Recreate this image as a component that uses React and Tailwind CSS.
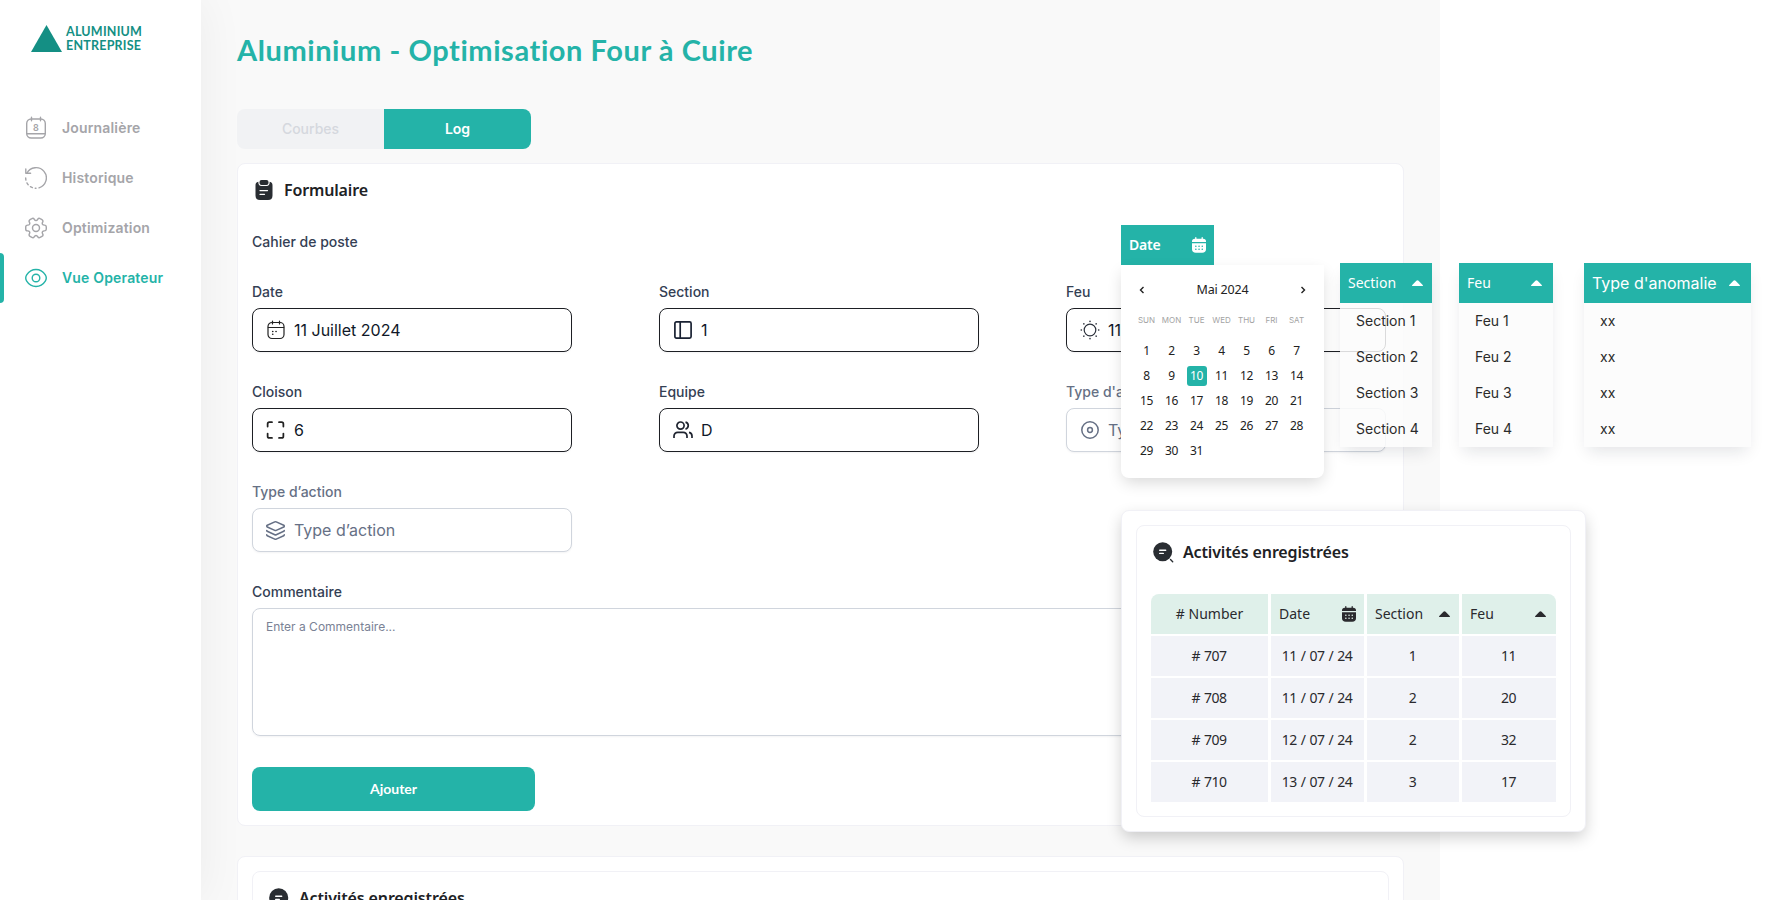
import React, { useState } from "react";
import { Layers, Maximize } from "lucide-react";

const JournalIcon = () => (
  <svg width="22" height="24" viewBox="0 0 22 24" fill="none" stroke="currentColor" strokeWidth="1.4" strokeLinecap="round">
    <rect x="1.7" y="3" width="18.6" height="19" rx="4.5" />
    <path d="M6.5 1.3v3.5M15.5 1.3v3.5M2 17.7h18" />
    <text x="11" y="14.9" textAnchor="middle" fontSize="9" fontWeight="600" fill="currentColor" stroke="none">
      8
    </text>
  </svg>
);

const HistoryIcon = () => (
  <svg width="22" height="24" viewBox="0 0 22 24" fill="none" stroke="currentColor" strokeWidth="1.4" strokeLinecap="round" strokeLinejoin="round">
    <path d="M1.9 7.2A10.3 10.3 0 1 1 14 21.8" />
    <path d="M.8 3v4.3h4.8" />
    <path d="M.7 12a10.3 10.3 0 0 0 10.3 10.3" strokeDasharray="2.2 2.9" />
  </svg>
);

const GearIcon = () => (
  <svg width="22" height="22" viewBox="1.3 1.3 21.4 21.4" fill="none" stroke="currentColor" strokeWidth="1.4" strokeLinejoin="round">
    <circle cx="12" cy="12" r="3.4" />
    <path d="M2 12.9v-1.8c0-1 .85-1.9 1.9-1.9 1.8 0 2.55-1.28 1.64-2.85-.52-.9-.21-2.07.7-2.59l1.73-.97c.79-.47 1.81-.19 2.28.6l.11.19c.9 1.57 2.38 1.57 3.29 0l.11-.19c.47-.79 1.49-1.07 2.28-.6l1.73.97c.91.52 1.22 1.69.7 2.59-.91 1.57-.17 2.85 1.64 2.85 1.04 0 1.9.85 1.9 1.9v1.8c0 1.04-.85 1.9-1.9 1.9-1.81 0-2.55 1.28-1.64 2.85.52.91.21 2.07-.7 2.59l-1.73.97c-.79.47-1.81.19-2.28-.6l-.11-.19c-.9-1.57-2.38-1.57-3.29 0l-.11.19c-.47.79-1.49 1.07-2.28.6l-1.73-.97c-.91-.52-1.22-1.69-.7-2.59.91-1.57.17-2.85-1.64-2.85-1.05 0-1.9-.86-1.9-1.9z" />
  </svg>
);

const EyeIcon = () => (
  <svg width="22" height="24" viewBox="0 0 22 24" fill="none" stroke="currentColor" strokeWidth="1.4">
    <path d="M11 3.5c4.5 0 7.5 2.6 9.3 5.4 1.2 1.9 1.2 4.3 0 6.2-1.8 2.8-4.8 5.4-9.3 5.4s-7.5-2.6-9.3-5.4c-1.2-1.9-1.2-4.3 0-6.2C3.5 6.1 6.5 3.5 11 3.5z" />
    <circle cx="11" cy="12" r="3.8" />
  </svg>
);

const ClipboardIcon = () => (
  <svg width="18" height="20" viewBox="0 0 18 20">
    <rect x="4.5" y="0" width="9" height="5" rx="2" fill="#292d32" />
    <path
      d="M14.7 1.7c0 3-1 4.3-3.2 4.3h-5C4.3 6 3.3 4.7 3.3 1.7 1.2 2 .5 3.4.5 5.5v10c0 3 1.5 4.5 4.500 4.500h8c3 0 4.500-1.500 4.500-4.500v-10c0-2.100-.7-3.500-2.800-3.800z"
      fill="#292d32"
    />
    <path d="M5 10.6h7.500M5 14.300h4.500" stroke="#fff" strokeWidth="1.3" strokeLinecap="round" />
  </svg>
);

const ActivityIcon = () => (
  <svg width="21" height="21" viewBox="0 0 21 21">
    <circle cx="9.7" cy="9.7" r="9.5" fill="#292d32" />
    <path d="M6.7 8.2h6M6.7 11.4h3.6" stroke="#fff" strokeWidth="1.4" strokeLinecap="round" />
    <path d="M17.5 17.5l2.2 2.2" stroke="#292d32" strokeWidth="1.4" strokeLinecap="round" />
  </svg>
);

const CalendarIcon = () => (
  <svg width="18" height="20" viewBox="0 0 18 20" fill="none" stroke="#222" strokeWidth="1.2" strokeLinecap="round">
    <rect x="1" y="2.5" width="16" height="16" rx="4" />
    <path d="M5.5 1v3M12.5 1v3M1.3 7.5h15.4" />
    <path d="M5.7 11.5h.1M9 11.5h.1M5.7 14.3h.1" strokeWidth="1.6" />
  </svg>
);

const ColumnsIcon = () => (
  <svg width="18" height="18" viewBox="0 0 18 18" fill="none" stroke="#1a2233" strokeWidth="1.7">
    <rect x=".9" y=".9" width="16.2" height="16.2" rx="1.5" />
    <path d="M6.2 1v16" />
  </svg>
);

const SunIcon = () => (
  <svg width="20" height="20" viewBox="0 0 20 20" fill="none" stroke="#2a2f3a" strokeWidth="1.2" strokeLinecap="round">
    <circle cx="10" cy="10" r="5.8" />
    <path
      d="M10 1.2v.2M10 18.6v.2M1.2 10h.2M18.6 10h.2M3.8 3.8l.1.1M16.1 3.9l.1-.1M3.8 16.2l.1-.1M16.1 16.1l.1.1"
      strokeWidth="1.5"
    />
  </svg>
);

const UsersIcon = () => (
  <svg width="20" height="18" viewBox="0 0 20 18" fill="none" stroke="#1f2430" strokeWidth="1.7">
    <circle cx="7.5" cy="4.6" r="3.6" />
    <path d="M1 17v-2a3.7 3.7 0 0 1 3.7-3.7h5.6A3.7 3.7 0 0 1 14 15v2" />
    <path d="M12.5 1.1a3.6 3.6 0 0 1 0 7M16 11.4a3.8 3.8 0 0 1 3 3.7V17" />
  </svg>
);

const TargetIcon = () => (
  <svg width="18" height="18" viewBox="0 0 18 18" fill="none" stroke="currentColor" strokeWidth="1.5">
    <circle cx="9" cy="9" r="8.2" />
    <circle cx="9" cy="9" r="2.4" />
  </svg>
);

const CalendarSolid = ({ dots }) => (
  <svg width="14" height="16" viewBox="0 0 14 16" fill="currentColor">
    <path d="M0 5V4.5C0 2.7 1 1.8 2.8 1.8h8.4C13 1.8 14 2.7 14 4.5V5z" />
    <path d="M0 6.2h14v5.8c0 2.5-1.3 3.8-3.8 3.8H3.8C1.3 15.8 0 14.5 0 12z" />
    <path d="M3.8.7v2M10.2.7v2" stroke="currentColor" strokeWidth="1.3" strokeLinecap="round" />
    <path
      d="M3.8 9.3h.1M7 9.3h.1M10.2 9.3h.1M3.8 12.2h.1M7 12.2h.1M10.2 12.2h.1"
      stroke={dots}
      strokeWidth="1.5"
      strokeLinecap="round"
    />
  </svg>
);

const Caret = () => (
  <svg width="11" height="6" viewBox="0 0 11 6" fill="currentColor">
    <path d="M.6 6C0 6-.1 5.3.3 4.9L4.4.7c.7-.7 1.5-.7 2.2 0l4.1 4.2c.4.4.3 1.1-.3 1.1z" />
  </svg>
);

const navItems = [
  { label: "Journalière", icon: <JournalIcon /> },
  { label: "Historique", icon: <HistoryIcon /> },
  { label: "Optimization", icon: <GearIcon /> },
  { label: "Vue Operateur", icon: <EyeIcon />, active: true },
];

const fields = [
  { label: "Date", value: "11 Juillet 2024", icon: <CalendarIcon />, filled: true },
  { label: "Section", value: "1", icon: <ColumnsIcon />, filled: true },
  { label: "Feu", value: "11", icon: <SunIcon />, filled: true },
  { label: "Cloison", value: "6", icon: <Maximize size={22} strokeWidth={2} color="#222" />, filled: true },
  { label: "Equipe", value: "D", icon: <UsersIcon />, filled: true },
  { label: "Type d'anomalie", value: "Type d'anomalie", icon: <TargetIcon /> },
  { label: "Type d’action", value: "Type d’action", icon: <Layers size={21} strokeWidth={1.8} /> },
];

const weekDays = ["SUN", "MON", "TUE", "WED", "THU", "FRI", "SAT"];
const days = Array.from({ length: 31 }, (_, i) => i + 1);

const rows = [
  ["# 707", "11 / 07 / 24", "1", "11"],
  ["# 708", "11 / 07 / 24", "2", "20"],
  ["# 709", "12 / 07 / 24", "2", "32"],
  ["# 710", "13 / 07 / 24", "3", "17"],
];

const Sidebar = () => (
  <aside className="relative z-10 w-[201px] shrink-0 bg-white shadow-[0_0_45px_rgba(0,0,0,0.06)]">
    <div className="flex h-[103px] items-start gap-1 pl-[31px] pt-[25px] text-[#148f84]">
      <svg width="31" height="27" viewBox="0 0 31 27">
        <path d="M15.5 0L31 27H0z" fill="#148f84" />
      </svg>
      <div className="font-['Lato'] text-[12.5px] font-bold leading-[14px] tracking-[0.22px]">
        <div>ALUMINIUM</div>
        <div>ENTREPRISE</div>
      </div>
    </div>
    <nav>
      {navItems.map((item) => (
        <a
          key={item.label}
          className={`relative flex h-[50px] items-center gap-[15px] pl-[25px] text-[14px] font-semibold tracking-[0.17px] ${
            item.active ? "text-[#24b3a8]" : "text-[#a5a5a9]"
          }`}
        >
          {item.active && <span className="absolute left-0 top-0 h-full w-1 rounded-r bg-[#24b3a8]" />}
          {item.icon}
          <span className="pb-0.5">{item.label}</span>
        </a>
      ))}
    </nav>
  </aside>
);

const Field = ({ label, value, icon, filled }) => (
  <div className="h-[100px] w-[320px]">
    <div className={`h-[26px] text-[14px] font-medium leading-5 ${filled ? "text-[#344054]" : "text-[#667085]"}`}>
      {label}
    </div>
    <div
      className={`flex h-11 items-center rounded-lg border bg-white pl-3 text-base shadow-[0_1px_2px_rgba(16,24,40,0.05)] ${
        filled ? "border-[#1d1f24] text-[#101828]" : "border-[#d0d5dd] text-[#667085]"
      }`}
    >
      <span className="mr-2 flex w-[21px] justify-center">{icon}</span>
      {value}
    </div>
  </div>
);

const ActivityTitle = () => (
  <div className="flex h-[21px] items-center gap-[9px] font-['Noto_Sans'] text-[16px] font-semibold text-[#202124]">
    <ActivityIcon />
    <span className="pb-0.5 tracking-[-0.14px]">Activités enregistrées</span>
  </div>
);

const DatePopup = () => {
  const [selected, setSelected] = useState(10);
  return (
    <div className="absolute left-[1121px] top-[225px] z-20 font-['Noto_Sans']">
      <div className="flex h-10 w-[93px] items-center justify-between bg-[#24b3a8] px-2 text-[14px] font-semibold text-white">
        <span className="pb-0.5 tracking-[-0.2px]">Date</span>
        <CalendarSolid dots="#24b3a8" />
      </div>
      <div className="h-[213px] w-[203px] rounded-b-lg bg-white px-[13px] pt-3 shadow-[0_6px_16px_-2px_rgba(0,0,0,0.16)]">
        <div className="flex h-[26px] items-center justify-between px-[5px] text-[#222]">
          <svg width="6" height="8" viewBox="0 0 6 8" fill="none" stroke="currentColor" strokeWidth="1.4">
            <path d="M4.5 1l-3 3 3 3" />
          </svg>
          <span className="text-[12.5px] tracking-[-0.2px]">Mai 2024</span>
          <svg width="6" height="8" viewBox="0 0 6 8" fill="none" stroke="currentColor" strokeWidth="1.4">
            <path d="M1.5 1l3 3-3 3" />
          </svg>
        </div>
        <div className="mt-[11px] grid w-[175px] grid-cols-7 text-center font-['Inter'] text-[8px] leading-3 text-[#a3a3a3]">
          {weekDays.map((d) => (
            <span key={d}>{d}</span>
          ))}
        </div>
        <div className="mt-3 grid w-[175px] grid-cols-7 justify-items-center text-[12px] tracking-[-0.3px] text-[#222]">
          {days.map((d) => (
            <button key={d} onClick={() => setSelected(d)} className="flex h-[25px] items-center justify-center">
              <span
                className={`flex h-5 w-5 items-center justify-center rounded-[3px] ${
                  d === selected ? "bg-[#24b3a8] text-white" : ""
                }`}
              >
                {d}
              </span>
            </button>
          ))}
        </div>
      </div>
    </div>
  );
};

const Dropdown = ({ title, items, className, headClass }) => (
  <div className={`absolute top-[263px] z-10 shadow-[0_8px_16px_-4px_rgba(16,24,40,0.12)] ${className}`}>
    <div className={`flex h-10 items-center justify-between bg-[#24b3a8] pl-2 text-white ${headClass}`}>
      <span className="pb-px">{title}</span>
      <Caret />
    </div>
    <ul className="h-36 bg-[#fcfcfc]/85 text-[14px] text-[#2b2b2b]">
      {items.map((item, i) => (
        <li key={i} className="flex h-9 items-center pb-px pl-4">
          {item}
        </li>
      ))}
    </ul>
  </div>
);

const ActivityPopup = () => (
  <div className="absolute left-[1121px] top-[510px] z-20 h-[322px] w-[465px] rounded-lg border border-[#f1f1f6] bg-white p-[14px] shadow-[0_6px_16px_-1px_rgba(0,0,0,0.2)]">
    <div className="h-[292px] rounded-lg border border-[#f1f1f6] px-[14px] pt-4">
      <div className="pl-0.5">
        <ActivityTitle />
      </div>
      <div className="mt-[31px] grid grid-cols-[117px_93px_92px_94px] gap-x-[3px] gap-y-[2px] font-['Noto_Sans'] text-[14px] text-[#2a2a2e]">
        <div className="flex h-10 items-center justify-center rounded-tl-lg bg-[#dff0ea] pb-px">
          # Number
        </div>
        <div className="flex items-center justify-between bg-[#dff0ea] px-2">
          <span className="pb-px">Date</span>
          <CalendarSolid dots="#dff0ea" />
        </div>
        <div className="flex items-center justify-between bg-[#dff0ea] pl-2 pr-[9px]">
          <span className="pb-px">Section</span>
          <Caret />
        </div>
        <div className="flex items-center justify-between rounded-tr-lg bg-[#dff0ea] pl-2 pr-[10px]">
          <span className="pb-px">Feu</span>
          <Caret />
        </div>
        {rows.flat().map((cell, i) => (
          <div
            key={i}
            className="flex h-10 items-center justify-center bg-[#f2f3f8] pb-0.5 pr-px tracking-[-0.55px] [word-spacing:1px]"
          >
            {cell}
          </div>
        ))}
      </div>
    </div>
  </div>
);

const App = () => {
  const [tab, setTab] = useState("Log");

  return (
    <div className="relative flex h-[900px] w-[1779px] overflow-hidden bg-white font-['Inter',sans-serif]">
      <Sidebar />
      <main className="w-[1239px] shrink-0 overflow-hidden bg-[#f9f9f9] pl-9">
        <h1 className="flex h-[109px] items-start pt-[29px] font-['Lato'] text-[29px] font-bold leading-[42px] tracking-[0.57px] text-[#24b3a8]">
          Aluminium - Optimisation Four à Cuire
        </h1>
        <div className="flex h-10 w-[294px] overflow-hidden rounded-lg text-[14px] font-medium">
          {["Courbes", "Log"].map((name) => (
            <button
              key={name}
              onClick={() => setTab(name)}
              className={`flex-1 pb-0.5 ${
                tab === name ? "bg-[#24b3a8] font-semibold text-white" : "bg-[#f1f2f4] text-[#d5d8de]"
              }`}
            >
              {name}
            </button>
          ))}
        </div>

        <section className="mt-[14px] h-[663px] w-[1167px] rounded-lg border border-[#f1f1f6] bg-white px-[14px] pt-4">
          <div className="flex h-5 items-center gap-[11px] pl-[3px] font-['Noto_Sans'] text-[16px] font-semibold text-[#202124]">
            <ClipboardIcon />
            <span className="tracking-[-0.15px]">Formulaire</span>
          </div>
          <div className="mt-8 text-[14px] font-medium leading-5 text-[#344054]">Cahier de poste</div>
          <div className="mt-[30px] grid grid-cols-[320px_320px_320px] gap-x-[87px]">
            {fields.map((field) => (
              <Field key={field.label} {...field} />
            ))}
          </div>
          <div className="h-[26px] text-[14px] font-medium leading-5 text-[#344054]">Commentaire</div>
          <textarea
            placeholder="Enter a Commentaire..."
            className="block h-32 w-full resize-none rounded-lg border border-[#d0d5dd] px-[13px] py-[9px] text-[12px] leading-[18px] shadow-[0_1px_2px_rgba(16,24,40,0.05)] placeholder:text-[#7a8295]"
          />
          <button className="mt-[31px] h-11 w-[283px] rounded-lg bg-[#24b3a8] pb-0.5 font-['Lato'] text-[14px] font-bold text-white">
            Ajouter
          </button>
        </section>

        <section className="mt-[30px] h-[340px] w-[1167px] rounded-lg border border-[#f1f1f6] bg-white p-[14px]">
          <div className="h-full rounded-lg border border-[#f1f1f6] pl-4 pt-4">
            <ActivityTitle />
          </div>
        </section>
      </main>

      <DatePopup />
      <Dropdown
        title="Section"
        items={["Section 1", "Section 2", "Section 3", "Section 4"]}
        className="left-[1340px] w-[92px]"
        headClass="pr-[9px] font-['Noto_Sans'] text-[14px]"
      />
      <Dropdown
        title="Feu"
        items={["Feu 1", "Feu 2", "Feu 3", "Feu 4"]}
        className="left-[1459px] w-[94px]"
        headClass="pr-[11px] font-['Noto_Sans'] text-[14px]"
      />
      <Dropdown
        title="Type d'anomalie"
        items={["xx", "xx", "xx", "xx"]}
        className="left-[1584px] w-[167px]"
        headClass="pr-[11px] text-[16px]"
      />
      <ActivityPopup />
    </div>
  );
};

export default App;
